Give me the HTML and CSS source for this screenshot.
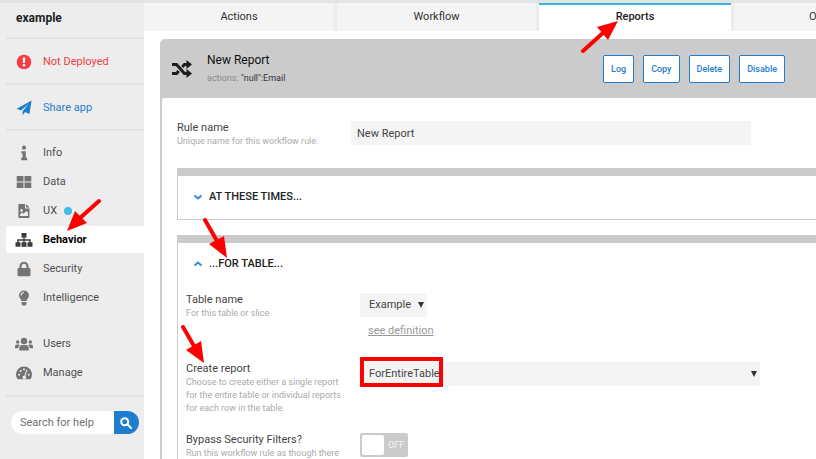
FILE: index.html
```html
<!DOCTYPE html>
<html lang="en">
<head>
<meta charset="utf-8">
<title>example - Reports</title>
<link rel="stylesheet" href="styles.css">
</head>
<body>
<div class="app">
  <aside class="sidebar">
    <h1 class="app-name">example</h1>
    <a class="status danger" href="#">
      <svg class="icon" viewBox="0 0 16 16"><circle cx="8" cy="8" r="7.3"/><path fill="#fff" d="M6.7 3.4h2.6L8.9 9H7.1z"/><circle cx="8" cy="11.3" r="1.3" fill="#fff"/></svg>Not Deployed</a>
    <a class="status share" href="#">
      <svg class="icon" viewBox="0 0 16 16"><path d="M15.6.6 13.4 14 8.900 12 6.600 15.500V11.300L13 3.600 5 10.600.6 8.800z"/></svg>Share app</a>
    <nav class="menu">
      <a href="#"><svg class="icon" viewBox="0 0 16 16"><circle cx="8" cy="2.700" r="2.100"/><path d="M5.400 6.200h4.400v6.600h1.300v2.400H5.200v-2.400h1.300V8.500H5.400z"/></svg>Info</a>
      <a href="#"><svg class="icon" viewBox="0 0 16 16"><path d="M.7 2h6.800v5.500H.7zM8.500 2h6.800v5.500H8.500zM.7 8.500h6.800V14H.7zM8.500 8.500h6.800V14H8.500z"/></svg>Data</a>
      <a href="#"><svg class="icon" viewBox="0 0 16 16"><path fill-rule="evenodd" d="M3 1h6v4.500h4.500v8.800a.8.8 0 0 1-.8.8H3.200a.8.8 0 0 1-.8-.8V1.600A.6.6 0 0 1 3 1zm1 12h8V9.500L10.300 8 7.500 10.800 6 9.400l-2 2zm1.500-4.300a1.300 1.300 0 1 0 0-2.600 1.300 1.300 0 0 0 0 2.600zM10 1l3.500 3.600H10z"/></svg>UX<span class="dot"></span></a>
      <a href="#" class="current"><svg class="icon wide" viewBox="0 0 18 16"><path d="M6.500 1h5v4.600H9.700v1.700h6v3h1.800v4.400h-5v-4.400h1.800V8.700H9.700v1.600h1.800v4.400h-5v-4.400h1.800V8.700H3.700v1.600h1.800v4.400h-5v-4.400h1.800v-3h6V5.600H6.500z"/></svg>Behavior</a>
      <a href="#"><svg class="icon" viewBox="0 0 16 16"><path fill-rule="evenodd" d="M3.500 7V5.200a4.500 4.500 0 0 1 9 0V7h.8a1.200 1.200 0 0 1 1.200 1.200v5.900a1.200 1.200 0 0 1-1.200 1.200H2.700a1.200 1.200 0 0 1-1.200-1.200V8.200A1.200 1.200 0 0 1 2.700 7zM5.600 7h4.800V5.200a2.400 2.400 0 0 0-4.800 0z"/></svg>Security</a>
      <a href="#"><svg class="icon" viewBox="0 0 16 16"><path fill-rule="evenodd" d="M8 .5a5 5 0 0 1 5 5c0 2.500-2 3.300-2.500 5.500h-5C5 8.800 3 8 3 5.500a5 5 0 0 1 5-5zM8 2a3.400 3.400 0 0 0-3.400 3.400h1A2.400 2.400 0 0 1 8 3zM5.600 12h4.800v2L9.300 15.600H6.700L5.600 14z"/></svg>Intelligence</a>
    </nav>
    <nav class="menu">
      <a href="#"><svg class="icon wide" viewBox="0 0 18 16"><circle cx="9" cy="5" r="3.200"/><circle cx="2.700" cy="6" r="1.800"/><circle cx="15.300" cy="6" r="1.800"/><path d="M4.200 14.500V12A3.200 3.200 0 0 1 7.400 9h3.200a3.200 3.200 0 0 1 3.200 3v2.500zM0 12.300v-2a1.800 1.800 0 0 1 1.800-1.800h1.800l1 .7a5 5 0 0 0-1.500 3.100zM18 12.300v-2a1.800 1.800 0 0 0-1.800-1.800h-1.800l-1 .7a5 5 0 0 1 1.500 3.100z"/></svg>Users</a>
      <a href="#"><svg class="icon" viewBox="0 0 16 16"><path d="M8 1.500a8 8 0 0 1 6.800 12.100 1.200 1.200 0 0 1-1 .6H2.200a1.200 1.200 0 0 1-1-.6A8 8 0 0 1 8 1.500z"/><g fill="#ededed"><circle cx="3.200" cy="9.700" r="1"/><circle cx="4.600" cy="6" r="1"/><circle cx="8" cy="4.300" r="1"/><circle cx="12.800" cy="9.700" r="1"/><path d="m10.500 4.600 1 .3L9.300 11a1.700 1.700 0 1 1-1-.3z"/></g></svg>Manage</a>
    </nav>
    <form class="search">
      <input type="text" placeholder="Search for help" aria-label="Search for help">
      <button type="button" aria-label="Search"><svg viewBox="0 0 12 12"><circle cx="4.700" cy="4.700" r="3.500"/><path d="m7.300 7.300 3.700 3.700"/></svg></button>
    </form>
  </aside>

  <main class="main">
    <nav class="tabs">
      <a href="#">Actions</a>
      <a href="#">Workflow</a>
      <a href="#" class="active">Reports</a>
      <a href="#" class="cut">O</a>
    </nav>
    <article class="rule">
      <header class="rule-head">
        <svg class="shuffle" viewBox="0 0 20 18"><path class="line" d="M0 4.500h4.500L12.500 13.500H16M0 13.500h4.500L6.700 11M10.200 7l2.300-2.500H16"/><path d="M14.500 0 20 4.500 14.500 9zM14.500 9l5.500 4.500-5.500 4.500z"/></svg>
        <div class="rule-title">
          <h2>New Report</h2>
          <p>actions: <b>"null":Email</b></p>
        </div>
        <div class="buttons">
          <button type="button">Log</button>
          <button type="button">Copy</button>
          <button type="button">Delete</button>
          <button type="button">Disable</button>
        </div>
      </header>
      <div class="rule-body">
        <div class="row">
          <div class="caption"><label for="rule-name">Rule name</label><p>Unique name for this workflow rule.</p></div>
          <input class="field" id="rule-name" type="text" value="New Report">
        </div>
        <section class="box">
          <h3><svg viewBox="0 0 10 10"><path d="m1.500 3.500 3.500 3 3.500-3"/></svg>AT THESE TIMES...</h3>
        </section>
        <section class="box open">
          <h3><svg viewBox="0 0 10 10"><path d="m1.500 6.500 3.500-3 3.500 3"/></svg>...FOR TABLE...</h3>
          <div class="row">
            <div class="caption"><label for="table">Table name</label><p>For this table or slice</p></div>
            <div class="control">
              <span class="select small"><select id="table"><option>Example</option></select></span>
              <a class="definition" href="#">see definition</a>
            </div>
          </div>
          <div class="row">
            <div class="caption"><label for="create">Create report</label><p>Choose to create either a single report for the entire table or individual reports for each row in the table.</p></div>
            <div class="control">
              <span class="select marked"><select id="create"><option>ForEntireTable</option></select></span>
            </div>
          </div>
          <div class="row">
            <div class="caption"><label for="bypass">Bypass Security Filters?</label><p>Run this workflow rule as though there</p></div>
            <label class="toggle"><input id="bypass" type="checkbox"><span>OFF</span></label>
          </div>
        </section>
      </div>
    </article>
  </main>
</div>
<svg class="arrows" viewBox="0 0 816 459" aria-hidden="true">
  <path class="shaft" d="M583 51 604 32M99 201 80 218M205 220 217 241M183 327 194 346"/>
  <path d="M618 21 608 40 597 27zM67 231 75 211 87 223zM227 258 209 244 224 236zM204 363 186 350 201 341z"/>
</svg>
</body>
</html>
```

FILE: styles.css
```css
*, ::before, ::after { box-sizing: border-box; }
body {
  margin: 0;
  height: 100vh;
  overflow: hidden;
  background: #fff;
  color: #444;
  font: 11px/14px Roboto, sans-serif;
}
h1, h2, h3, p { margin: 0; font-weight: 400; }
a { color: inherit; text-decoration: none; }
input, select, button { font: inherit; color: inherit; border: 0; margin: 0; }

.app {
  display: flex;
  height: 100vh;
  border-top: 3px solid #e4e4e4;
}

/* Sidebar */
.sidebar {
  flex: none;
  width: 144px;
  padding-left: 6px;
  background: #ededed;
}
.app-name {
  height: 36px;
  padding: 8px 10px;
  border-bottom: 2px solid #e2e2e2;
  color: #222;
  font-size: 12px;
  font-weight: 700;
}
.status, .menu a {
  display: flex;
  align-items: center;
  gap: 10px;
  padding: 1px 0 0 10px;
}
.status {
  height: 46px;
  border-bottom: 2px solid #e2e2e2;
}
.danger { color: #f23d42; }
.share { color: #1f7dd0; }
.icon {
  width: 16px;
  height: 16px;
  margin: 0 1px 0 0;
  fill: currentColor;
}
.wide { width: 18px; margin: 0 0 0 -1px; }
.menu { padding-top: 7px; color: #505050; }
.menu + .menu { padding: 17px 0 8px; border-bottom: 2px solid #e2e2e2; }
.menu a { height: 29px; }
.menu .icon { color: #747474; }
.menu .current {
  height: 27px;
  margin: 1px 0;
  border-radius: 3px 0 0 3px;
  background: #fff;
  color: #000;
  font-weight: 700;
}
.menu .current .icon { color: #3c3c3c; }
.dot {
  width: 8px;
  height: 8px;
  margin-left: -3px;
  border-radius: 50%;
  background: #41bce8;
}
.search {
  display: flex;
  height: 23px;
  margin: 14px 5px 0;
  border-radius: 12px;
  overflow: hidden;
  background: #fff;
}
.search input {
  flex: 1;
  min-width: 0;
  padding: 0 0 0 9px;
  background: none;
  outline: 0;
}
.search input::placeholder { color: #707070; opacity: 1; }
.search button {
  width: 25px;
  padding: 0 0 0 6px;
  background: #1f7dd0;
}
.search svg {
  display: block;
  width: 12px;
  height: 12px;
  fill: none;
  stroke: #fff;
  stroke-width: 2;
  stroke-linecap: round;
}

/* Tabs */
.main { flex: 1; min-width: 0; overflow: hidden; }
.tabs {
  display: grid;
  grid-template-columns: 190px 199px 192px 1fr;
  gap: 3px;
  height: 28px;
  background: #ececec;
  color: #333;
}
.tabs a {
  padding: 7px 0;
  background: #f4f4f4;
  text-align: center;
}
.tabs .active {
  padding-top: 5px;
  border-top: 2px solid #35b8e0;
  background: #fff;
  color: #222;
  font-weight: 500;
}
.tabs .cut { padding-left: 75px; text-align: left; }

/* Rule panel */
.rule {
  margin: 8px 0 0 16px;
  border-left: 2px solid #cbcbcb;
  border-radius: 5px 0 0 0;
  background: #cbcbcb;
}
.rule-head {
  display: flex;
  align-items: center;
  height: 59px;
  padding: 0 31px 0 10px;
}
.shuffle { width: 20px; height: 18px; fill: #1c1c1c; }
.shuffle .line { fill: none; stroke: #1c1c1c; stroke-width: 3; }
.rule-title { flex: 1; margin-left: 15px; }
.rule-title h2 { margin-bottom: 4px; color: #111; font-size: 12px; }
.rule-title p { color: #8b8b8b; font-size: 9px; }
.rule-title b { color: #333; font-weight: 400; }
.buttons { display: flex; gap: 9px; }
.buttons button {
  height: 28px;
  padding: 0 7px;
  border: 1px solid #1f7dd0;
  border-radius: 2px;
  background: #fff;
  color: #1f7dd0;
  font-size: 9px;
  font-weight: 500;
}
.rule-body {
  padding: 23px 0 0 15px;
  border-radius: 2px 0 0 0;
  background: #fff;
}
.row {
  display: grid;
  grid-template-columns: 158px minmax(0, 400px);
  column-gap: 16px;
  align-items: start;
}
.caption label { color: #444; }
.caption p { color: #aaa; font-size: 9px; line-height: 13px; }
.field {
  height: 24px;
  padding: 0 6px;
  border-radius: 2px;
  background: #f4f4f4;
}
.box {
  height: 52px;
  margin-top: 15px;
  border: 1px solid #ccc;
  border-top: 8px solid #cbcbcb;
  border-right: 0;
}
.row + .box { margin-top: 20px; }
.open { height: auto; padding: 0 0 24px 8px; }
.box h3 {
  display: flex;
  align-items: center;
  gap: 6px;
  height: 42px;
  padding-left: 15px;
  color: #222;
  font-size: 11px;
  font-weight: 500;
}
.open h3 { padding-left: 7px; }
.box h3 svg {
  width: 10px;
  height: 10px;
  fill: none;
  stroke: #3589d8;
  stroke-width: 2;
}
.open .row { min-height: 69px; padding-top: 8px; }
.open .row + .row { min-height: 71px; }
.control { display: flex; flex-direction: column; align-items: flex-start; }
.select { position: relative; width: 100%; }
.select select {
  display: block;
  width: 100%;
  height: 24px;
  padding: 0 9px;
  border-radius: 2px;
  background: #f4f4f4;
  appearance: none;
}
.select::after {
  content: "";
  position: absolute;
  top: 9px;
  right: 3px;
  border: solid transparent;
  border-width: 6px 3px 0;
  border-top-color: #333;
}
.small { width: 67px; }
.marked::before {
  content: "";
  position: absolute;
  top: -5px;
  left: 0;
  z-index: 1;
  width: 83px;
  height: 30px;
  border: 4px solid #f00;
  border-radius: 1px;
}
.definition {
  margin: 7px 8px 0;
  color: #999;
  text-decoration: underline;
}
.toggle {
  display: flex;
  align-items: center;
  width: 48px;
  height: 24px;
  padding: 2px;
  border-radius: 2px;
  background: #cbcbcb;
  color: #f4f4f4;
  font-size: 9px;
}
.toggle input {
  appearance: none;
  width: 22px;
  height: 20px;
  margin-right: 4px;
  border-radius: 2px;
  background: #fff;
}

/* Callout arrows drawn over the page */
.arrows {
  position: absolute;
  top: 0;
  left: 0;
  width: 816px;
  height: 459px;
  pointer-events: none;
  fill: #f00;
}
.shaft { fill: none; stroke: #f00; stroke-width: 4; stroke-linecap: round; }
```
